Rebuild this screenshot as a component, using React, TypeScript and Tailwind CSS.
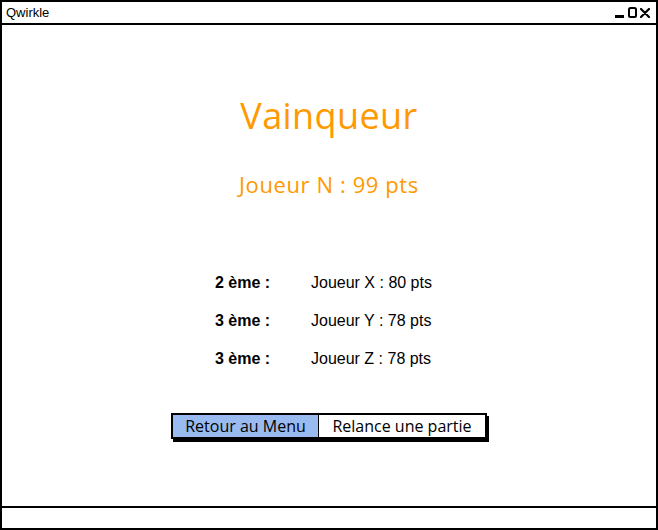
import React from 'react';

const ranks = [
  { place: '2 ème :', player: 'Joueur X : 80 pts' },
  { place: '3 ème :', player: 'Joueur Y : 78 pts' },
  { place: '3 ème :', player: 'Joueur Z : 78 pts' },
];

const sketchFont = { fontFamily: '"Open Sans", "Noto Sans", sans-serif' };

export default function App() {
  return (
    <div className="w-[658px] h-[530px] bg-white flex flex-col border-2 border-black" style={sketchFont}>
      {/* title bar */}
      <div className="h-[23px] flex items-center justify-between px-[4px] border-b-2 border-black">
        <span className="text-[13px] leading-none text-black" style={{ fontFamily: '"Liberation Sans", Arial, sans-serif' }}>
          Qwirkle
        </span>
        <div className="flex items-center gap-[3px] pr-[2px]">
          <svg width="10" height="10" viewBox="0 0 10 10">
            <path d="M0 8.5 H9" stroke="#000" strokeWidth="3" />
          </svg>
          <svg width="9" height="11" viewBox="0 0 9 11">
            <rect x="1" y="1" width="7" height="9" rx="1.5" fill="none" stroke="#000" strokeWidth="2" />
          </svg>
          <svg width="10" height="10" viewBox="0 0 10 10">
            <path d="M1 1 L9 9 M9 1 L1 9" stroke="#000" strokeWidth="2.2" strokeLinecap="round" />
          </svg>
        </div>
      </div>

      {/* content */}
      <div className="flex-1 flex flex-col items-center">
        <h1 className="mt-[67px] text-[36px] leading-[48px] tracking-[0.4px] text-[#ff9900]">Vainqueur</h1>
        <p className="mt-[30px] text-[22px] leading-[28px] tracking-[0.6px] text-[#ff9900]">Joueur N : 99 pts</p>

        <div
          className="mt-[75px] w-[228px] flex flex-col gap-[18px] text-[16px] leading-[20px] text-black"
          style={{ fontFamily: '"Liberation Sans", Arial, sans-serif' }}
        >
          {ranks.map((r, i) => (
            <div key={i} className="flex">
              <span className="w-[96px] font-bold">{r.place}</span>
              <span>{r.player}</span>
            </div>
          ))}
        </div>

        <div className="mt-[44px] flex border-2 border-black shadow-[2px_3px_0_#000] text-[16px] leading-[22px]">
          <button className="w-[146px] h-[22px] bg-[#99bbf0] text-black border-r border-black">Retour au Menu</button>
          <button className="w-[166px] h-[22px] bg-white text-black">Relance une partie</button>
        </div>
      </div>

      {/* status bar */}
      <div className="h-[22px] border-t-2 border-black" />
    </div>
  );
}
